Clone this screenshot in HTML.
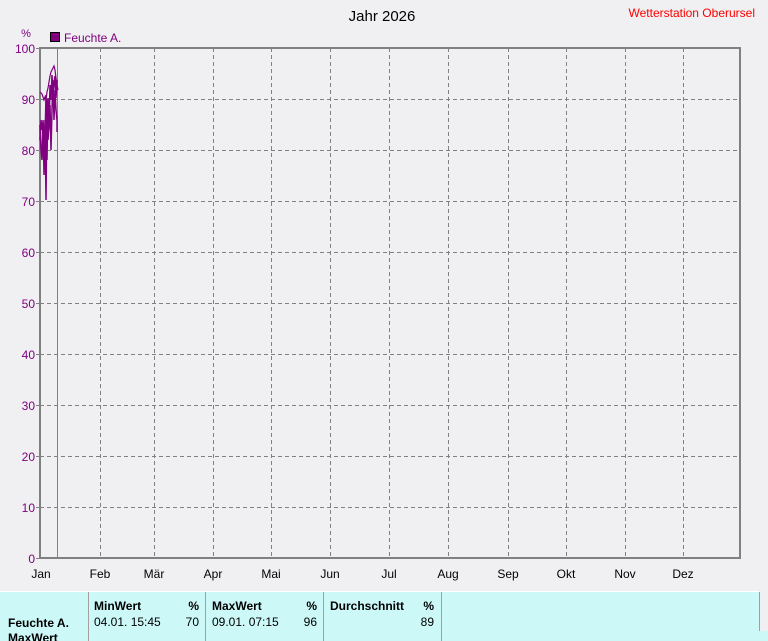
<!DOCTYPE html>
<html><head><meta charset="utf-8"><style>
html,body{margin:0;padding:0;background:#f0f0f2;width:768px;height:641px;overflow:hidden;font-family:"Liberation Sans",Arial,sans-serif}
svg{position:absolute;left:0;top:0}
</style></head><body>
<svg width="768" height="641" xmlns="http://www.w3.org/2000/svg" font-family="Liberation Sans, Arial, sans-serif">
<text x="382" y="21" font-size="15" text-anchor="middle" fill="#000">Jahr 2026</text>
<text x="755" y="17" font-size="12" text-anchor="end" fill="#ff0000">Wetterstation Oberursel</text>
<text x="26" y="37" font-size="11" text-anchor="middle" fill="#800080">%</text>
<rect x="50.5" y="32.5" width="9" height="9" fill="#800080" stroke="#000"/>
<text x="64" y="42" font-size="12" fill="#800080">Feuchte A.</text>
<g stroke="#808080" stroke-dasharray="4,3" stroke-width="1">
<line x1="40" y1="99.5" x2="740" y2="99.5"/><line x1="40" y1="150.5" x2="740" y2="150.5"/><line x1="40" y1="201.5" x2="740" y2="201.5"/><line x1="40" y1="252.5" x2="740" y2="252.5"/><line x1="40" y1="303.5" x2="740" y2="303.5"/><line x1="40" y1="354.5" x2="740" y2="354.5"/><line x1="40" y1="405.5" x2="740" y2="405.5"/><line x1="40" y1="456.5" x2="740" y2="456.5"/><line x1="40" y1="507.5" x2="740" y2="507.5"/>
<line x1="100.5" y1="48" x2="100.5" y2="558"/><line x1="154.5" y1="48" x2="154.5" y2="558"/><line x1="213.5" y1="48" x2="213.5" y2="558"/><line x1="271.5" y1="48" x2="271.5" y2="558"/><line x1="330.5" y1="48" x2="330.5" y2="558"/><line x1="389.5" y1="48" x2="389.5" y2="558"/><line x1="448.5" y1="48" x2="448.5" y2="558"/><line x1="508.5" y1="48" x2="508.5" y2="558"/><line x1="566.5" y1="48" x2="566.5" y2="558"/><line x1="625.5" y1="48" x2="625.5" y2="558"/><line x1="683.5" y1="48" x2="683.5" y2="558"/>
</g>
<line x1="57.5" y1="48" x2="57.5" y2="558" stroke="#808080"/>
<g stroke="#808080" stroke-width="1">
<line x1="36" y1="48.5" x2="40" y2="48.5"/><line x1="36" y1="99.5" x2="40" y2="99.5"/><line x1="36" y1="150.5" x2="40" y2="150.5"/><line x1="36" y1="201.5" x2="40" y2="201.5"/><line x1="36" y1="252.5" x2="40" y2="252.5"/><line x1="36" y1="303.5" x2="40" y2="303.5"/><line x1="36" y1="354.5" x2="40" y2="354.5"/><line x1="36" y1="405.5" x2="40" y2="405.5"/><line x1="36" y1="456.5" x2="40" y2="456.5"/><line x1="36" y1="507.5" x2="40" y2="507.5"/><line x1="36" y1="558.5" x2="40" y2="558.5"/>
</g>
<rect x="40" y="48" width="700" height="510" fill="none" stroke="#808080" stroke-width="2"/>
<polyline fill="none" stroke="#800080" stroke-width="1.2" points="40,92 42,94 44,100 45,97 46,100 47,92 48,88 49,82 50,76 51,72 52,70 53,68 54,66 55,70 56,78 57,85 58,90"/>
<polyline fill="none" stroke="#800080" stroke-width="1.5" points="40,125 41,150 42,160 43,120 44,175 45,120 46,200 47,100 48,140 49,125 50,105 51,150 52,110 53,80 54,120 55,90 56,110 57,120 57,132"/>
<polyline fill="none" stroke="#800080" stroke-width="1.5" points="40,140 41,120 42,130 43,122 44,128 45,140 46,95 47,160 48,98 49,130 50,85 51,100 52,75 53,95 54,85 55,76 56,98 57,80"/>
<g font-size="12" fill="#800080" text-anchor="end">
<text x="35" y="53">100</text><text x="35" y="104">90</text><text x="35" y="155">80</text><text x="35" y="206">70</text><text x="35" y="257">60</text><text x="35" y="308">50</text><text x="35" y="359">40</text><text x="35" y="410">30</text><text x="35" y="461">20</text><text x="35" y="512">10</text><text x="35" y="563">0</text>
</g>
<g font-size="12" fill="#000" text-anchor="middle">
<text x="41" y="578">Jan</text><text x="100" y="578">Feb</text><text x="154" y="578">Mär</text><text x="213" y="578">Apr</text><text x="271" y="578">Mai</text><text x="330" y="578">Jun</text><text x="389" y="578">Jul</text><text x="448" y="578">Aug</text><text x="508" y="578">Sep</text><text x="566" y="578">Okt</text><text x="625" y="578">Nov</text><text x="683" y="578">Dez</text>
</g>
<rect x="0" y="591" width="759" height="50" fill="#ccf8f8"/>
<rect x="759" y="631" width="9" height="10" fill="#ccf8f8"/>
<line x1="0" y1="591.5" x2="759" y2="591.5" stroke="#fff"/>
<g stroke="#a0a0a0"><line x1="88.5" y1="592" x2="88.5" y2="641"/><line x1="205.5" y1="592" x2="205.5" y2="641"/><line x1="323.5" y1="592" x2="323.5" y2="641"/><line x1="441.5" y1="592" x2="441.5" y2="641"/><line x1="759.5" y1="592" x2="759.5" y2="631"/></g>
<g font-size="12" fill="#000">
<text x="8" y="627" font-weight="bold">Feuchte A.</text>
<text x="8" y="642" font-weight="bold">MaxWert</text>
<text x="94" y="610" font-weight="bold">MinWert</text><text x="199" y="610" font-weight="bold" text-anchor="end">%</text>
<text x="94" y="626">04.01.  15:45</text><text x="199" y="626" text-anchor="end">70</text>
<text x="212" y="610" font-weight="bold">MaxWert</text><text x="317" y="610" font-weight="bold" text-anchor="end">%</text>
<text x="212" y="626">09.01.  07:15</text><text x="317" y="626" text-anchor="end">96</text>
<text x="330" y="610" font-weight="bold">Durchschnitt</text><text x="434" y="610" font-weight="bold" text-anchor="end">%</text>
<text x="434" y="626" text-anchor="end">89</text>
</g>
</svg>
</body></html>
